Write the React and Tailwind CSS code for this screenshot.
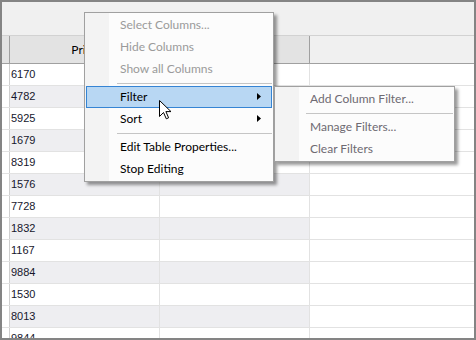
import React from "react";

const values = [
  "6170", "4782", "5925", "1679", "8319", "1576", "7728",
  "1832", "1167", "9884", "1530", "8013", "9844",
];

const uiFont = { fontFamily: 'Lato, "Noto Sans", sans-serif' };

const Arrow = () => (
  <svg width="4" height="7" viewBox="0 0 4 7" className="shrink-0">
    <polygon points="0,0 4,3.5 0,7" fill="#000" />
  </svg>
);

const MenuItem = ({ label, disabled, sub, active, color }) => (
  <div
    className={
      "relative flex h-[22px] items-center mr-px ml-px " +
      (active ? "bg-[#b8d7f3] outline outline-1 -outline-offset-1 outline-[#3584d4]" : "")
    }
  >
    <span
      className="pl-[34px] text-[12px] leading-none"
      style={{ color: color || (disabled ? "#9a9a9a" : "#000") }}
    >
      {label}
    </span>
    {sub && (
      <span className="absolute right-[11px] top-[7px] flex">
        <Arrow />
      </span>
    )}
  </div>
);

const Separator = ({ left }) => (
  <div className="flex h-[6px] items-center">
    <div className={"h-px flex-1 bg-[#c5c5c5] mr-px " + left} />
  </div>
);

const Cursor = () => (
  <svg
    width="13"
    height="20"
    viewBox="0 0 13 20"
    className="absolute left-[157px] top-[98px]"
  >
    <path
      d="M0.5 0.5 L0.5 16.5 L4.5 12.5 L7.3 18.8 L9.6 17.8 L6.9 11.6 L12 11.6 Z"
      fill="#fff"
      stroke="#000"
      strokeWidth="1"
      strokeLinejoin="miter"
    />
  </svg>
);

export default function App() {
  return (
    <div className="relative h-[340px] w-[476px] overflow-hidden border-2 border-[#848484] bg-[#f0f0f0]">
      <div className="h-[34px] border-b border-[#d2d2d2]" />

      {/* header */}
      <div
        className="flex h-[28px] border-b border-[#a0a0a0] text-[12px] text-[#000]"
        style={uiFont}
      >
        <div className="w-[8px] border-r border-[#a0a0a0] bg-[#e3e3e3]" />
        <div className="flex w-[150px] items-center justify-center border-r border-[#a0a0a0] bg-[#e3e3e3]">
          Price
        </div>
        <div className="w-[150px] border-r border-[#a0a0a0] bg-[#e3e3e3]" />
        <div className="flex-1" />
      </div>

      {/* rows */}
      <div
        className="bg-white text-[11px] text-[#16162c]"
        style={{ fontFamily: '"Liberation Sans", Arial, sans-serif' }}
      >
        {values.map((v, i) => (
          <div key={v} className="flex h-[22px] border-b border-[#e2e2e2]">
            <div className="w-[8px] border-r border-[#cfcfcf] bg-white" />
            <div
              className={
                "flex w-[150px] items-center border-r border-[#e2e2e2] pl-px " +
                (i % 2 ? "bg-[#eeeef1]" : "bg-white")
              }
            >
              {v}
            </div>
            <div
              className={
                "w-[150px] border-r border-[#e2e2e2] " +
                (i % 2 ? "bg-[#eeeef1]" : "bg-white")
              }
            />
            <div className="flex-1 bg-white" />
          </div>
        ))}
      </div>

      {/* context menu */}
      <div
        className="absolute left-[82px] top-[10px] w-[190px] border border-[#a0a0a0] bg-[#fcfcfc] py-px shadow-[3px_3px_3px_rgba(0,0,0,0.4)]"
        style={uiFont}
      >
        <div className="absolute bottom-0 left-0 top-0 w-[24px] bg-[#f3f3f3]" />
        <div className="relative">
          <MenuItem label="Select Columns..." disabled />
          <MenuItem label="Hide Columns" disabled />
          <MenuItem label="Show all Columns" disabled />
          <Separator left="ml-[32px]" />
          <MenuItem label="Filter" sub active />
          <MenuItem label="Sort" sub />
          <Separator left="ml-[32px]" />
          <MenuItem label="Edit Table Properties..." />
          <MenuItem label="Stop Editing" />
        </div>
      </div>

      {/* submenu */}
      <div
        className="absolute left-[272px] top-[84px] w-[181px] border border-[#a0a0a0] bg-[#fcfcfc] py-px shadow-[3px_3px_3px_rgba(0,0,0,0.4)]"
        style={uiFont}
      >
        <div className="absolute bottom-0 left-0 top-0 w-[24px] bg-[#f3f3f3]" />
        <div className="relative">
          <MenuItem label="Add Column Filter..." color="#6e6a72" />
          <Separator left="ml-[31px]" />
          <MenuItem label="Manage Filters..." color="#6e6a72" />
          <MenuItem label="Clear Filters" color="#6e6a72" />
        </div>
      </div>

      <Cursor />
    </div>
  );
}
